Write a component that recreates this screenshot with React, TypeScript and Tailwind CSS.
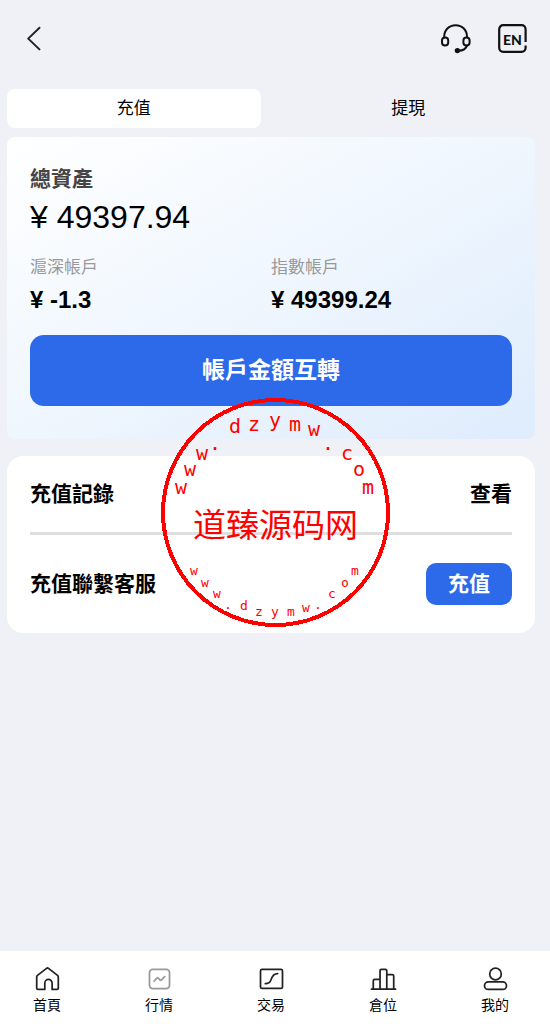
import type { ReactNode } from "react";

const RING_TOP: [string, number, number][] = [
  ["w", 181, 494],
  ["w", 190, 476],
  ["w", 202, 460],
  [".", 215, 450],
  ["d", 235, 433],
  ["z", 254, 431],
  ["y", 275, 427],
  ["m", 295, 431],
  ["w", 314, 436],
  [".", 328, 450],
  ["c", 347, 460],
  ["o", 359, 476],
  ["m", 368, 494],
];

const RING_BOTTOM: [string, number, number][] = [
  ["w", 194, 575],
  ["w", 205, 587],
  ["w", 217, 598],
  [".", 228, 609],
  ["d", 244, 610],
  ["z", 259, 616],
  ["y", 275, 616],
  ["m", 291, 616],
  ["w", 306, 612],
  [".", 318, 609],
  ["c", 332, 598],
  ["o", 345, 587],
  ["m", 355, 575],
];

function Stamp() {
  return (
    <svg
      className="pointer-events-none absolute top-[398px] left-1/2 -translate-x-1/2"
      width="230"
      height="230"
      viewBox="160 398 230 230"
      fill="#ff0000"
      textAnchor="middle"
    >
      <circle cx="275.5" cy="512.5" r="112.5" fill="none" stroke="#ff0000" strokeWidth="4" shapeRendering="crispEdges" />
      <g className="font-['DejaVu_Sans_Mono',monospace] text-[20px]">
        {RING_TOP.map(([ch, x, y], i) => (
          <text key={i} x={x} y={y}>
            {ch}
          </text>
        ))}
      </g>
      <text x="275.5" y="537" className="font-['Noto_Sans_CJK_SC',sans-serif] text-[33px]">
        道臻源码网
      </text>
      <g className="font-['DejaVu_Sans_Mono',monospace] text-[13px]">
        {RING_BOTTOM.map(([ch, x, y], i) => (
          <text key={i} x={x} y={y}>
            {ch}
          </text>
        ))}
      </g>
    </svg>
  );
}

function HeadsetIcon() {
  return (
    <svg width="30" height="30" viewBox="0 0 30 30" fill="none" stroke="#111" strokeWidth="2" strokeLinecap="round">
      <path d="M3.2 13.2C3 6 8 1.2 14.600 1.2S26.2 6 26 13.2" />
      <rect x="1" y="13.4" width="6.2" height="8.2" rx="3.1" />
      <rect x="22.4" y="13.4" width="6.2" height="8.2" rx="3.1" />
      <path d="M26 21.6c-1 3.2-4 5-8.5 5.2" />
      <circle cx="16.4" cy="26.6" r="1.7" fill="#111" />
    </svg>
  );
}

function LangIcon() {
  return (
    <svg width="30" height="30" viewBox="0 0 30 30" fill="none" stroke="#111" strokeWidth="2.2" strokeLinecap="butt">
      <path d="M27.6 18V5.2A4 4 0 0 0 23.6 1.2H5.2a4 4 0 0 0-4 4V23.8a4 4 0 0 0 4 4H23.6a4 4 0 0 0 4-4v-2.4" />
      <text x="14.5" y="20.500" textAnchor="middle" fill="#111" stroke="none" className="font-['Lato',sans-serif] text-[14px] font-black">
        EN
      </text>
    </svg>
  );
}

function NavIcon({ color = "#222", children }: { color?: string; children: ReactNode }) {
  return (
    <svg width="27" height="28" viewBox="0 0 28 28" fill="none" stroke={color} strokeWidth="1.8" strokeLinecap="round" strokeLinejoin="round">
      {children}
    </svg>
  );
}

const NAV_ITEMS = [
  {
    label: "首頁",
    icon: (
      <NavIcon>
        <path d="M4 24.8q-1.2 0-1.2-1.2V12q0-1 .8-1.7L13 3q1-.8 2 0l9.4 7.3q.8.7.8 1.7v11.6q0 1.2-1.2 1.2h-5.2v-6.5a3.8 3.8 0 0 0-7.6 0v6.5z" />
      </NavIcon>
    ),
  },
  {
    label: "行情",
    icon: (
      <NavIcon color="#999">
        <rect x="3.6" y="4" width="20.8" height="20" rx="3.4" />
        <path d="M8.4 16.2l2.7-3q.8-.8 1.6 0l1.7 1.7q.8.8 1.6 0l3.4-3.4" />
      </NavIcon>
    ),
  },
  {
    label: "交易",
    icon: (
      <NavIcon>
        <rect x="2.6" y="4" width="22.8" height="19.8" rx="1.6" />
        <path d="M7.6 18.8c4.2 0 5.2-1.6 6.2-4.800s2.4-5.600 6.600-5.600" />
      </NavIcon>
    ),
  },
  {
    label: "倉位",
    icon: (
      <NavIcon>
        <path d="M1.5 24.500h25M3.400 24.500v-8.500q0-1.500 1.500-1.500h5.300M10.400 24.500V5.500q0-1.500 1.500-1.500h4q1.500 0 1.500 1.500v19M17.600 9.400h5.400q1.600 0 1.600 1.600v13.500" />
      </NavIcon>
    ),
  },
  {
    label: "我的",
    icon: (
      <NavIcon>
        <circle cx="14" cy="8.8" r="6" />
        <rect x="2.6" y="17" width="22.8" height="7.8" rx="3.9" />
      </NavIcon>
    ),
  },
];

function Account({ name, amount }: { name: string; amount: string }) {
  return (
    <div className="flex-1">
      <div className="text-[17px] leading-6 text-[#999]">{name}</div>
      <div className="mt-1 text-2xl leading-8 font-bold">{amount}</div>
    </div>
  );
}

export default function App() {
  return (
    <div className="relative flex min-h-screen flex-col bg-[#f0f1f6] font-['Liberation_Sans','Noto_Sans_CJK_TC',sans-serif] text-black">
      <header className="flex h-[77px] items-center justify-between pr-[22px] pl-[26px]">
        <button type="button" aria-label="返回">
          <svg width="16" height="26" viewBox="0 0 16 26" fill="none" stroke="#222" strokeWidth="2" strokeLinecap="round" strokeLinejoin="round">
            <path d="M13.5 1.8 2.2 12.6l11.3 10.8" />
          </svg>
        </button>
        <div className="flex gap-[27px]">
          <button type="button" aria-label="客服">
            <HeadsetIcon />
          </button>
          <button type="button">
            <LangIcon />
          </button>
        </div>
      </header>

      <main className="pt-3 pr-[15px] pl-[7px]">
        <div className="flex gap-[21px] text-[17px] leading-6">
          <button type="button" className="h-[39px] flex-1 rounded-lg bg-white">
            充值
          </button>
          <button type="button" className="h-[39px] flex-1 rounded-lg">
            提現
          </button>
        </div>

        <section className="mt-[9px] rounded-lg bg-[linear-gradient(150deg,#ffffff,#eff6fe_50%,#deecfc)] px-[23px] pt-7 pb-[33px]">
          <h2 className="text-[21px] leading-7 font-bold text-[#444]">總資產</h2>
          <div className="mt-[3px] text-[32px] leading-[42px]">¥ 49397.94</div>
          <div className="mt-[18px] flex">
            <Account name="滬深帳戶" amount="¥ -1.3" />
            <Account name="指數帳戶" amount="¥ 49399.24" />
          </div>
          <button type="button" className="mt-[19px] h-[71px] w-full rounded-[14px] bg-[#2d6aea] text-[23px] font-bold text-white">
            帳戶金額互轉
          </button>
        </section>

        <section className="mt-[17px] rounded-2xl bg-white px-[23px] text-[21px] font-bold">
          <div className="flex h-[79px] items-center justify-between border-b-3 border-[#dedede]">
            <span>充值記錄</span>
            <a href="#records">查看</a>
          </div>
          <div className="flex h-[98px] items-center justify-between">
            <span>充值聯繫客服</span>
            <button type="button" className="h-[42px] w-[86px] rounded-[10px] bg-[#2d6aea] text-white">
              充值
            </button>
          </div>
        </section>
      </main>

      <nav className="mt-auto flex h-[73px] justify-between bg-white pt-[14px] pr-[41px] pl-[33px] text-sm">
        {NAV_ITEMS.map((item) => (
          <a key={item.label} href="#" className="flex flex-col items-center">
            {item.icon}
            <span className="leading-6">{item.label}</span>
          </a>
        ))}
      </nav>

      <Stamp />
    </div>
  );
}
